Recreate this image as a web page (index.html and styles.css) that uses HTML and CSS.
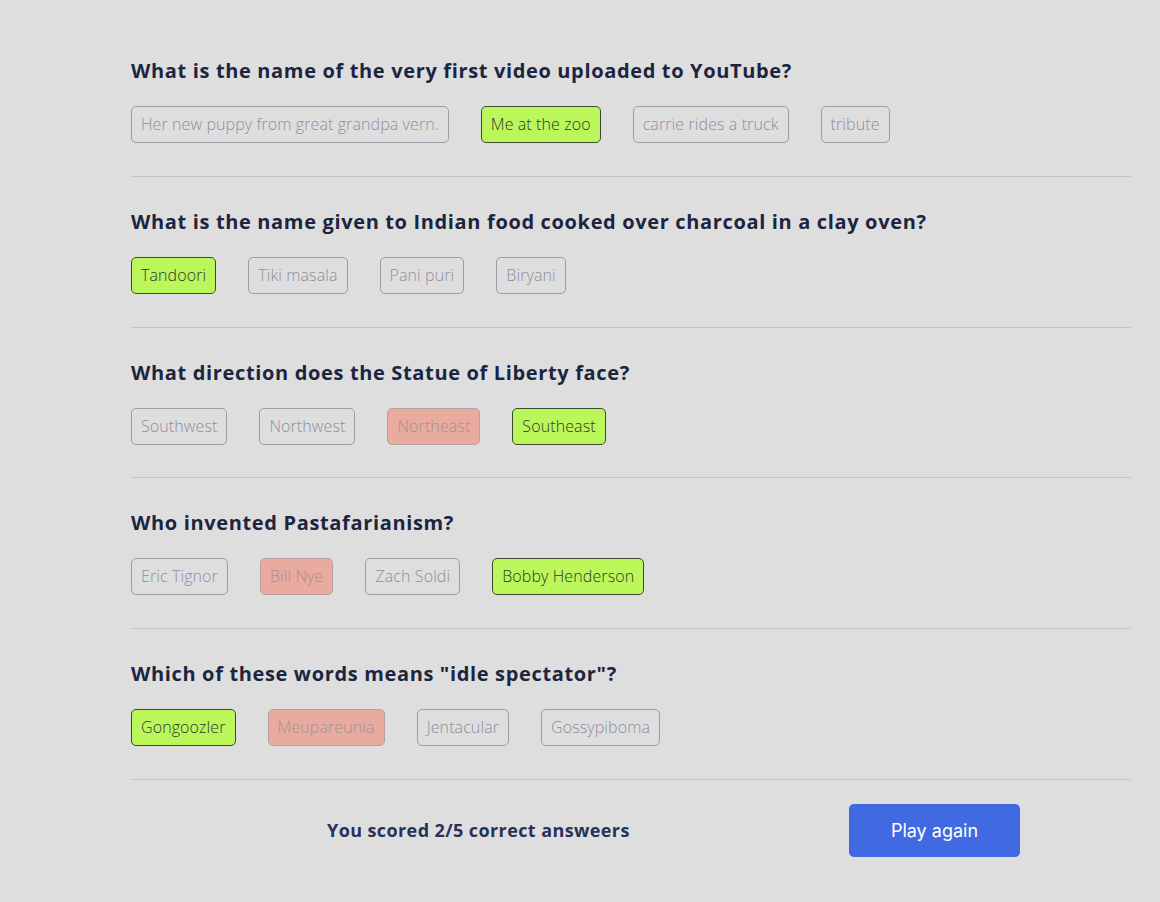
FILE: index.html
```html
<!DOCTYPE html>
<html>
<head>
<meta charset="utf-8">
<link rel="stylesheet" href="styles.css">
</head>
<body>
<main class="quiz">
  <section class="question">
    <h2 class="q-title">What is the name of the very first video uploaded to YouTube?</h2>
    <div class="answers">
      <span class="answer">Her new puppy from great grandpa vern.</span>
      <span class="answer correct">Me at the zoo</span>
      <span class="answer">carrie rides a truck</span>
      <span class="answer">tribute</span>
    </div>
  </section>
  <section class="question">
    <h2 class="q-title">What is the name given to Indian food cooked over charcoal in a clay oven?</h2>
    <div class="answers">
      <span class="answer correct">Tandoori</span>
      <span class="answer">Tiki masala</span>
      <span class="answer">Pani puri</span>
      <span class="answer">Biryani</span>
    </div>
  </section>
  <section class="question">
    <h2 class="q-title">What direction does the Statue of Liberty face?</h2>
    <div class="answers">
      <span class="answer">Southwest</span>
      <span class="answer">Northwest</span>
      <span class="answer wrong">Northeast</span>
      <span class="answer correct">Southeast</span>
    </div>
  </section>
  <section class="question">
    <h2 class="q-title">Who invented Pastafarianism?</h2>
    <div class="answers">
      <span class="answer">Eric Tignor</span>
      <span class="answer wrong">Bill Nye</span>
      <span class="answer">Zach Soldi</span>
      <span class="answer correct">Bobby Henderson</span>
    </div>
  </section>
  <section class="question">
    <h2 class="q-title">Which of these words means "idle spectator"?</h2>
    <div class="answers">
      <span class="answer correct">Gongoozler</span>
      <span class="answer wrong">Meupareunia</span>
      <span class="answer">Jentacular</span>
      <span class="answer">Gossypiboma</span>
    </div>
  </section>
  <footer class="result">
    <p class="score">You scored 2/5 correct answeers</p>
    <button class="play">Play again</button>
  </footer>
</main>
</body>
</html>
```

FILE: styles.css
```css
html, body {
  margin: 0;
  padding: 0;
  background: #dedede;
}
body {
  font-family: "Open Sans", "Liberation Sans", sans-serif;
}
.quiz {
  width: 1000px;
  margin-left: 131px;
  padding-top: 26px;
}
.question {
  border-bottom: 1px solid #c4c4c4;
  padding: 33px 0 32.75px;
}
.q-title {
  margin: 0;
  font-size: 20px;
  line-height: 24px;
  font-weight: 700;
  letter-spacing: 0.65px;
  color: #1c2540;
}
.answers {
  display: flex;
  gap: 32px;
  margin-top: 23px;
}
.answer {
  box-sizing: border-box;
  height: 37px;
  line-height: 35px;
  padding: 0 9px;
  border: 1px solid #9d9daa;
  border-radius: 5px;
  font-size: 16px;
  font-weight: 300;
  letter-spacing: 0.1px;
  color: #8e8e9c;
  white-space: nowrap;
}
.answer.correct {
  background: #bbf75b;
  border-color: #3a4a33;
  color: #2b3a28;
}
.answer.wrong {
  background: #e9aaa0;
  border-color: #b8a0a0;
  color: #a89090;
}
.result {
  display: flex;
  align-items: center;
  padding: 24px 0 0 196px;
}
.score {
  margin: 0;
  width: 522px;
  font-size: 18px;
  font-weight: 700;
  letter-spacing: 0.4px;
  color: #283258;
}
.play {
  width: 171px;
  height: 53px;
  border: none;
  border-radius: 5px;
  background: #4169e1;
  color: #ffffff;
  font-family: Inter, "Liberation Sans", sans-serif;
  font-size: 18px;
}
```
